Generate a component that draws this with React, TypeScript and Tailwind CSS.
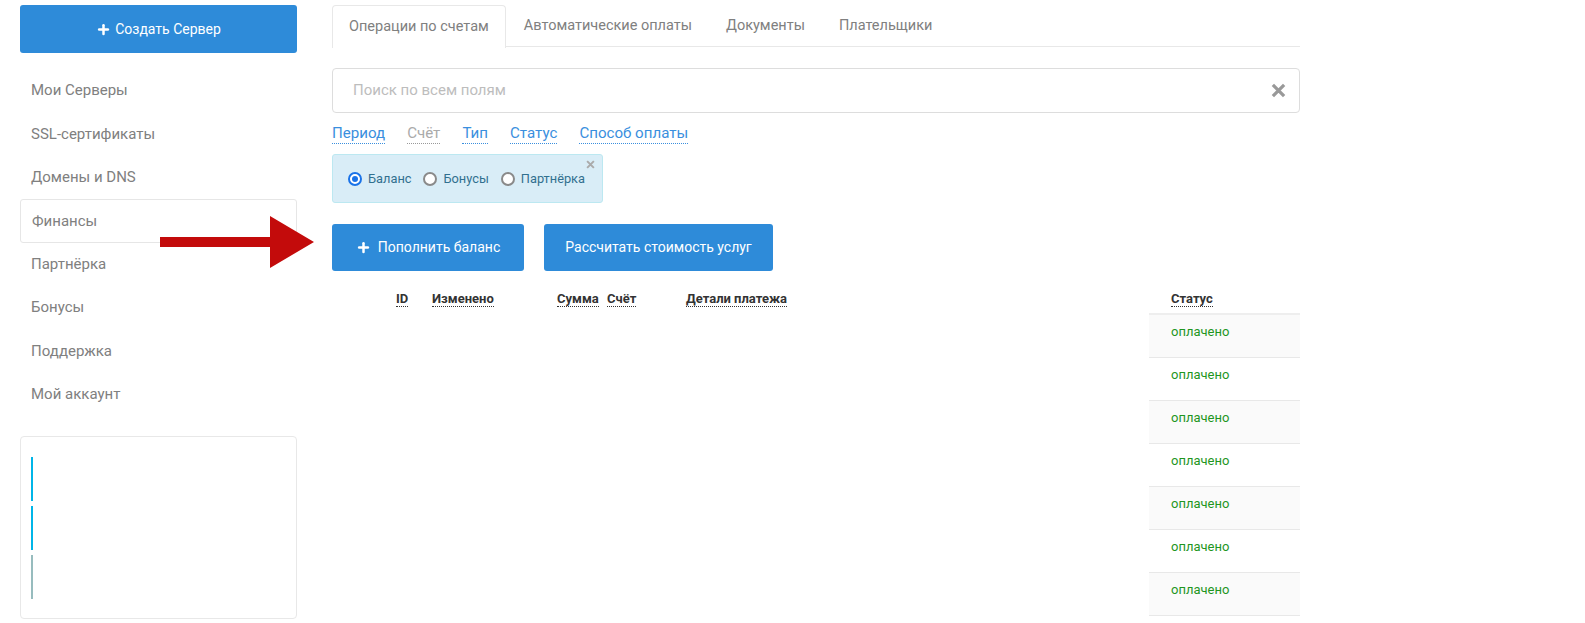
import { Plus } from 'lucide-react'

const navItems = ['Мои Серверы', 'SSL-сертификаты', 'Домены и DNS', 'Финансы', 'Партнёрка', 'Бонусы', 'Поддержка', 'Мой аккаунт']
const tabs = ['Операции по счетам', 'Автоматические оплаты', 'Документы', 'Плательщики']
const filters = [
    { label: 'Период', active: true },
    { label: 'Счёт', active: false },
    { label: 'Тип', active: true },
    { label: 'Статус', active: true },
    { label: 'Способ оплаты', active: true },
]
const rows = Array.from({ length: 7 }, () => 'оплачено')

function CloseIcon({ className }: { className?: string }) {
    return (
        <svg viewBox="0 0 12 12" className={className}>
            <path d="M1.5 1.5 L10.5 10.5 M10.5 1.5 L1.5 10.5" stroke="currentColor" strokeWidth="2.6" strokeLinecap="butt" />
        </svg>
    )
}

function Radio({ checked, label }: { checked?: boolean; label: string }) {
    return (
        <label className="flex items-center gap-[6px]">
            <span
                className={`w-[14px] h-[14px] rounded-full border-2 flex items-center justify-center bg-white ${checked ? 'border-[#1a73e8]' : 'border-[#8a8a8a]'}`}
            >
                {checked && <span className="w-[6px] h-[6px] rounded-full bg-[#1a73e8]" />}
            </span>
            <span>{label}</span>
        </label>
    )
}

function Sidebar() {
    return (
        <aside className="w-[277px] shrink-0 pt-[5px]">
            <button className="w-full h-[48px] rounded-[3px] bg-[#2e8bd9] text-white text-[14px] flex items-center justify-center gap-[4px]">
                <Plus size={15} strokeWidth={4} />
                <span>Создать Сервер</span>
            </button>

            <nav className="mt-[16px]">
                {navItems.map((item) => (
                    <div
                        key={item}
                        className={`h-[43.4px] flex items-center px-[11px] text-[15px] text-[#808080] ${item === 'Финансы' ? 'border border-[#e6e6e6] rounded-[3px] px-[10px]' : ''}`}
                    >
                        {item}
                    </div>
                ))}
            </nav>

            {/* widget box */}
            <div className="mt-[20px] h-[183px] border border-[#e8e8e8] rounded-[4px] pl-[10px] pt-[20px] flex flex-col gap-[5px]">
                <div className="w-[2px] h-[44px] bg-[#00b5e8]" />
                <div className="w-[2px] h-[44px] bg-[#00b5e8]" />
                <div className="w-[2px] h-[44px] bg-[#97bcbe]" />
            </div>
        </aside>
    )
}

export default function App() {
    return (
        <div className="relative w-[1585px] h-[623px] overflow-hidden bg-white flex gap-[35px] pl-[20px]" style={{ fontFamily: 'Roboto, "Liberation Sans", sans-serif' }}>
            <Sidebar />

            <main className="w-[968px] shrink-0 pt-[5px]">
                {/* Tabs */}
                <div className="flex gap-[2px] border-b border-[#e8e8e8] h-[42px]">
                    {tabs.map((tab, i) => (
                        <div
                            key={tab}
                            className={`px-[16px] flex items-center text-[14.5px] text-[#808080] ${i === 0 ? 'border border-b-0 border-[#e8e8e8] rounded-t-[4px] bg-white h-[43px] text-[#6a6a6a]' : ''}`}
                        >
                            {tab}
                        </div>
                    ))}
                </div>

                {/* Search */}
                <div className="mt-[21px] h-[45px] border border-[#ddd] rounded-[4px] flex items-center justify-between pl-[20px] pr-[13px]">
                    <span className="text-[15px] text-[#bdbdbd]">Поиск по всем полям</span>
                    <CloseIcon className="w-[15px] h-[15px] text-[#999]" />
                </div>

                {/* Filters */}
                <div className="mt-[10px] flex gap-[22px] text-[15.1px] leading-[20px]">
                    {filters.map((f) => (
                        <span
                            key={f.label}
                            className={`border-b border-dotted ${f.active ? 'text-[#3a8fde] border-[#3a8fde]' : 'text-[#aaa] border-[#999]'}`}
                        >
                            {f.label}
                        </span>
                    ))}
                </div>

                {/* Alert */}
                <div className="relative mt-[10px] w-[271px] h-[49px] bg-[#d9edf7] border border-[#bce8f1] rounded-[3px] flex items-center gap-[12px] pl-[15px] text-[12.8px] text-[#31708f]">
                    <Radio checked label="Баланс" />
                    <Radio label="Бонусы" />
                    <Radio label="Партнёрка" />
                    <CloseIcon className="absolute right-[7px] top-[5px] w-[9px] h-[9px] text-[#aaa]" />
                </div>

                {/* Buttons */}
                <div className="mt-[21px] flex gap-[20px]">
                    <button className="h-[47px] w-[192px] rounded-[3px] bg-[#2e8bd9] text-white text-[14px] flex items-center justify-center gap-[7px]">
                        <Plus size={15} strokeWidth={4} />
                        <span>Пополнить баланс</span>
                    </button>
                    <button className="h-[47px] w-[229px] rounded-[3px] bg-[#2e8bd9] text-white text-[14px] flex items-center justify-center">
                        Рассчитать стоимость услуг
                    </button>
                </div>

                {/* Table */}
                <div className="grid grid-cols-[64px_36px_125px_50px_79px_1fr_151px] text-[13px]">
                    <div className="h-[44px]" />
                    {['ID', 'Изменено', 'Сумма', 'Счёт', 'Детали платежа'].map((h) => (
                        <div key={h} className="h-[44px] flex items-end pb-[8px] font-bold text-[#333]">
                            <span className="border-b border-dotted border-[#333] leading-[14px]">{h}</span>
                        </div>
                    ))}
                    <div className="h-[44px] border-b-2 border-[#eee] pl-[22px] flex items-end pb-[6px] font-bold text-[#333]">
                        <span className="border-b border-dotted border-[#333] leading-[14px]">Статус</span>
                    </div>

                    {rows.map((status, i) => (
                        <div key={i} className="contents">
                            <div className="col-span-6" />
                            <div className={`h-[43px] border-b border-[#e8e8e8] pl-[22px] pt-[9px] leading-[15px] text-[#1f961f] ${i % 2 === 0 ? 'bg-[#fafafa]' : 'bg-white'}`}>
                                {status}
                            </div>
                        </div>
                    ))}
                </div>
            </main>

            {/* Red pointer arrow */}
            <svg className="absolute left-[160px] top-[216px]" width="156" height="52" viewBox="0 0 156 52">
                <path d="M0 21 H110 V0 L154 26 L110 52 V31 H0 Z" fill="#c30b0b" />
            </svg>
        </div>
    )
}
